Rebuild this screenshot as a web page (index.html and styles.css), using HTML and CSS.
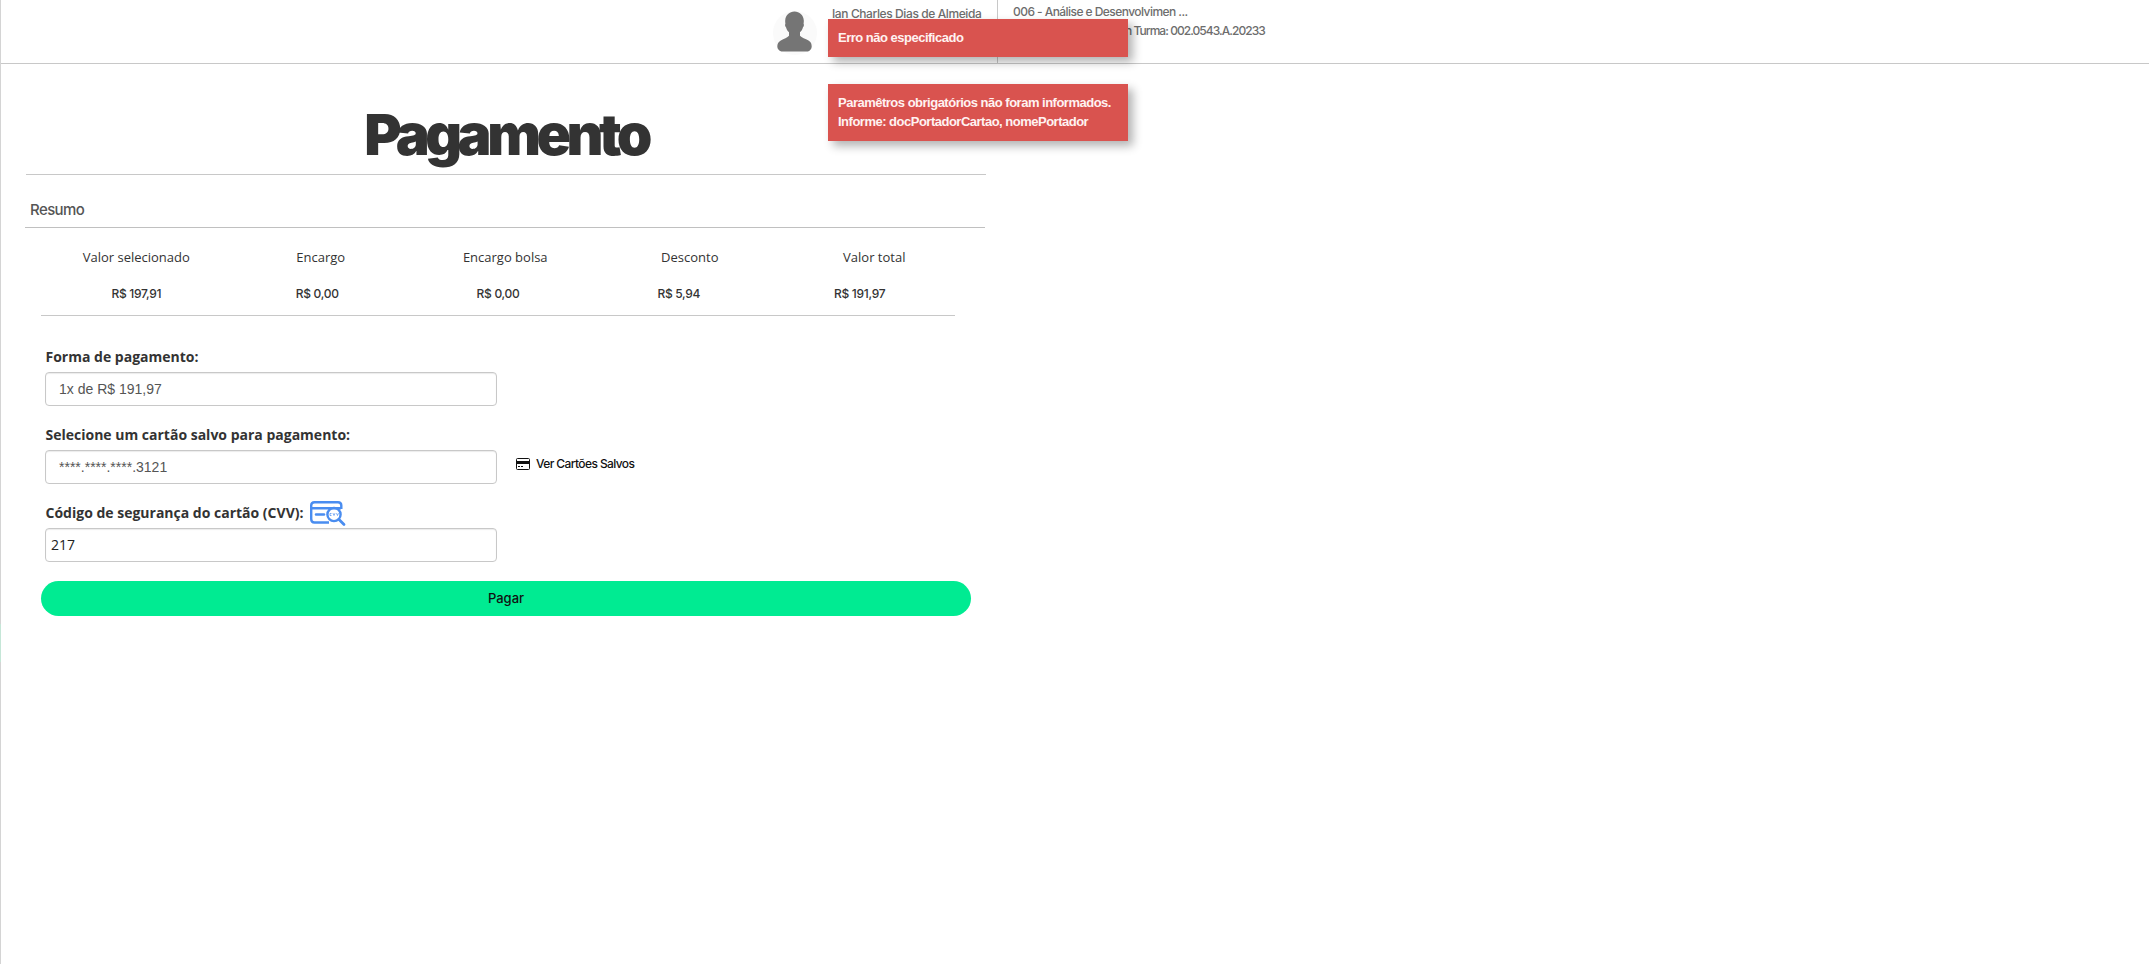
FILE: index.html
```html
<!DOCTYPE html>
<html lang="pt-BR">
<head>
<meta charset="utf-8">
<title>Pagamento</title>
<link rel="stylesheet" href="styles.css">
</head>
<body>
<header class="topbar">
  <div class="user">
    <svg class="avatar" viewBox="0 0 46 46"><circle cx="23" cy="23" r="22" fill="#fafafa"/><path fill="#757575" d="M22.500 1.500c5 0 9 3.500 9.300 9 .1 1.500-.2 2.500-.2 3.600.6.400.4 2.200-.7 3.400-.6 2-1.400 3.700-2.900 4.800v3.500c1.500 2 5.500 3.200 8.500 4.700 2.500 1.300 3.200 3.700 3.200 6 0 2.500-1.500 4-3.700 5H9.300c-2.400-1-4-2.500-4-5 0-2.300 1-4.700 3.500-6 3-1.500 6.700-2.700 8.200-4.700v-3.500c-1.500-1.100-2.300-2.800-2.900-4.800-1.100-1.200-1.400-3-.7-3.400 0-1.100-.3-2.100-.2-3.600.300-5.500 4.300-9 9.300-9z"/></svg>
    <span class="user-name">Ian Charles Dias de Almeida</span>
  </div>
  <div class="course">
    <div class="course-name">006 - Análise e Desenvolvimen ...</div>
    <div class="course-class">n Turma: 002.0543.A.20233</div>
  </div>
</header>
<div class="toasts">
  <div class="toast">Erro não especificado</div>
  <div class="toast">Paramêtros obrigatórios não foram informados.<br>Informe: docPortadorCartao, nomePortador</div>
</div>
<i class="edge-mark"></i>
<main class="page">
  <h1 class="title">Pagamento</h1>
  <h2 class="subtitle">Resumo</h2>
  <section class="summary">
    <div class="heads"><span>Valor selecionado</span><span>Encargo</span><span>Encargo bolsa</span><span>Desconto</span><span>Valor total</span></div>
    <div class="values"><span>R$ 197,91</span><span>R$ 0,00</span><span>R$ 0,00</span><span>R$ 5,94</span><span>R$ 191,97</span></div>
  </section>
  <form class="form">
    <div class="field">
      <label class="label">Forma de pagamento:</label>
      <div class="row"><div class="input">1x de R$ 191,97</div></div>
    </div>
    <div class="field">
      <label class="label">Selecione um cartão salvo para pagamento:</label>
      <div class="row"><div class="input">****.****.****.3121</div>
        <a class="saved"><svg width="14" height="12" viewBox="0 0 14 12"><rect x=".5" y=".5" width="13" height="11" rx="1" fill="none" stroke="#111"/><path fill="#111" d="M1 3h12v3H1zM2 8h2v1H2zM5 8h2v1H5z"/></svg><span>Ver Cartões Salvos</span></a></div>
    </div>
    <div class="field">
      <label class="label">Código de segurança do cartão (CVV):<svg class="cvv" width="36" height="26" viewBox="0 0 36 26" fill="none" stroke="#4a8df0" stroke-width="2.400"><path d="M19 21.500H4.500Q1.200 21.500 1.200 18V4.500Q1.200 1.200 4.500 1.200H28Q31.300 1.200 31.300 4.500V8M1 7.300H31"/><path d="M6 13.500H14" stroke-width="2.500" stroke-linecap="round"/><circle cx="24" cy="13.500" r="6.600"/><path d="M29 18.500l5 5" stroke-width="2.800" stroke-linecap="round"/><path d="M21.500 12.500h-1.500v2h1.500M23 12.200l1 2.300 1-2.300M26.500 12.200l1 2.300 1-2.300" stroke-width="1" opacity=".7"/></svg></label>
      <div class="row"><div class="input cvv-input">217</div></div>
    </div>
    <button class="pay" type="button">Pagar</button>
  </form>
</main>
</body>
</html>
```
FILE: styles.css
```css
* { box-sizing: border-box; }
body { margin: 0; min-height: 964px; background: #fff; border-left: 1px solid #d4d4d4; font-family: "Open Sans", sans-serif; color: #333; }
.topbar { display: flex; height: 64px; border-bottom: 1px solid #c8c8c8; padding-left: 771px; font-family: Inter, sans-serif; font-size: 12px; font-weight: 500; color: #6d6d6d; white-space: nowrap; }
.user { display: flex; width: 226px; border-right: 1px solid #c8c8c8; }
.avatar { width: 46px; height: 46px; margin-top: 10px; }
.user-name { margin: 4px 0 0 14px; line-height: 19px; letter-spacing: -0.4px; }
.course { padding: 2px 0 0 15px; line-height: 19px; width: 270px; }
.course-name { letter-spacing: -0.55px; }
.course-class { letter-spacing: -0.95px; padding-left: 112px; }
.toasts { position: absolute; left: 828px; top: 19px; width: 300px; display: grid; gap: 27px; }
.toast { width: 300px; background: #d9534f; color: #fff2f1; padding: 9px 10px 10px; font: bold 13px/19px "Liberation Sans", sans-serif; letter-spacing: -0.5px; box-shadow: 5px 5px 9px rgba(0,0,0,.3); white-space: nowrap; }
.edge-mark { position: absolute; left: 0; top: 624px; width: 1px; height: 38px; background: #c5e6d7; }
.page { width: 960px; margin-left: 24px; }
.title { margin: 0 -1px 0 1px; height: 111px; padding-top: 36px; border-bottom: 1px solid #c8c8c8; text-align: center; font: 900 57px/70px Inter, sans-serif; letter-spacing: -4.500px; }
.subtitle { margin: 0; height: 53px; padding: 25px 5px 0; border-bottom: 1px solid #c0c0c0; font: 500 15px/20px Inter, sans-serif; letter-spacing: -0.6px; color: #555; }
.summary { margin-left: 16px; width: 914px; height: 88px; border-bottom: 1px solid #c8c8c8; padding-top: 19px; }
.heads { display: grid; grid-template-columns: repeat(5, 184.500px); margin-left: 3px; font-size: 13px; line-height: 20px; text-align: center; white-space: nowrap; }
.values { display: grid; grid-template-columns: repeat(5, 180.800px); margin: 17px 0 0 5px; font: 500 12px/20px Inter, sans-serif; letter-spacing: -0.3px; text-align: center; }
.form { margin-left: 16px; padding-top: 31px; }
.field { margin-left: 4px; height: 78px; }
.label { display: flex; height: 26px; margin-bottom: -1px; padding-left: 0.5px; font-size: 14px; line-height: 20px; font-weight: 700; white-space: nowrap; }
.cvv { margin: -2px 0 0 6.500px; flex: none; }
.row { display: flex; align-items: center; }
.input { width: 452px; height: 34px; border: 1px solid #c8c8c8; border-radius: 4px; padding: 0 13px; font: 14px/32px "Liberation Sans", sans-serif; color: #555; box-shadow: inset 0 1px 1px rgba(0,0,0,.08); background: #fff; }
.cvv-input { padding: 0 5px; color: #222; font: 14px/32px "Open Sans", sans-serif; }
.saved { display: flex; align-items: center; gap: 6px; margin: -6px 0 0 19px; font: 500 12px/20px Inter, sans-serif; letter-spacing: -0.6px; color: #111; white-space: nowrap; }
.pay { display: block; width: 930px; height: 35px; border: 0; border-radius: 18px; background: #00eb92; color: #111; font: 500 13px/35px Inter, sans-serif; padding: 0; }
```
